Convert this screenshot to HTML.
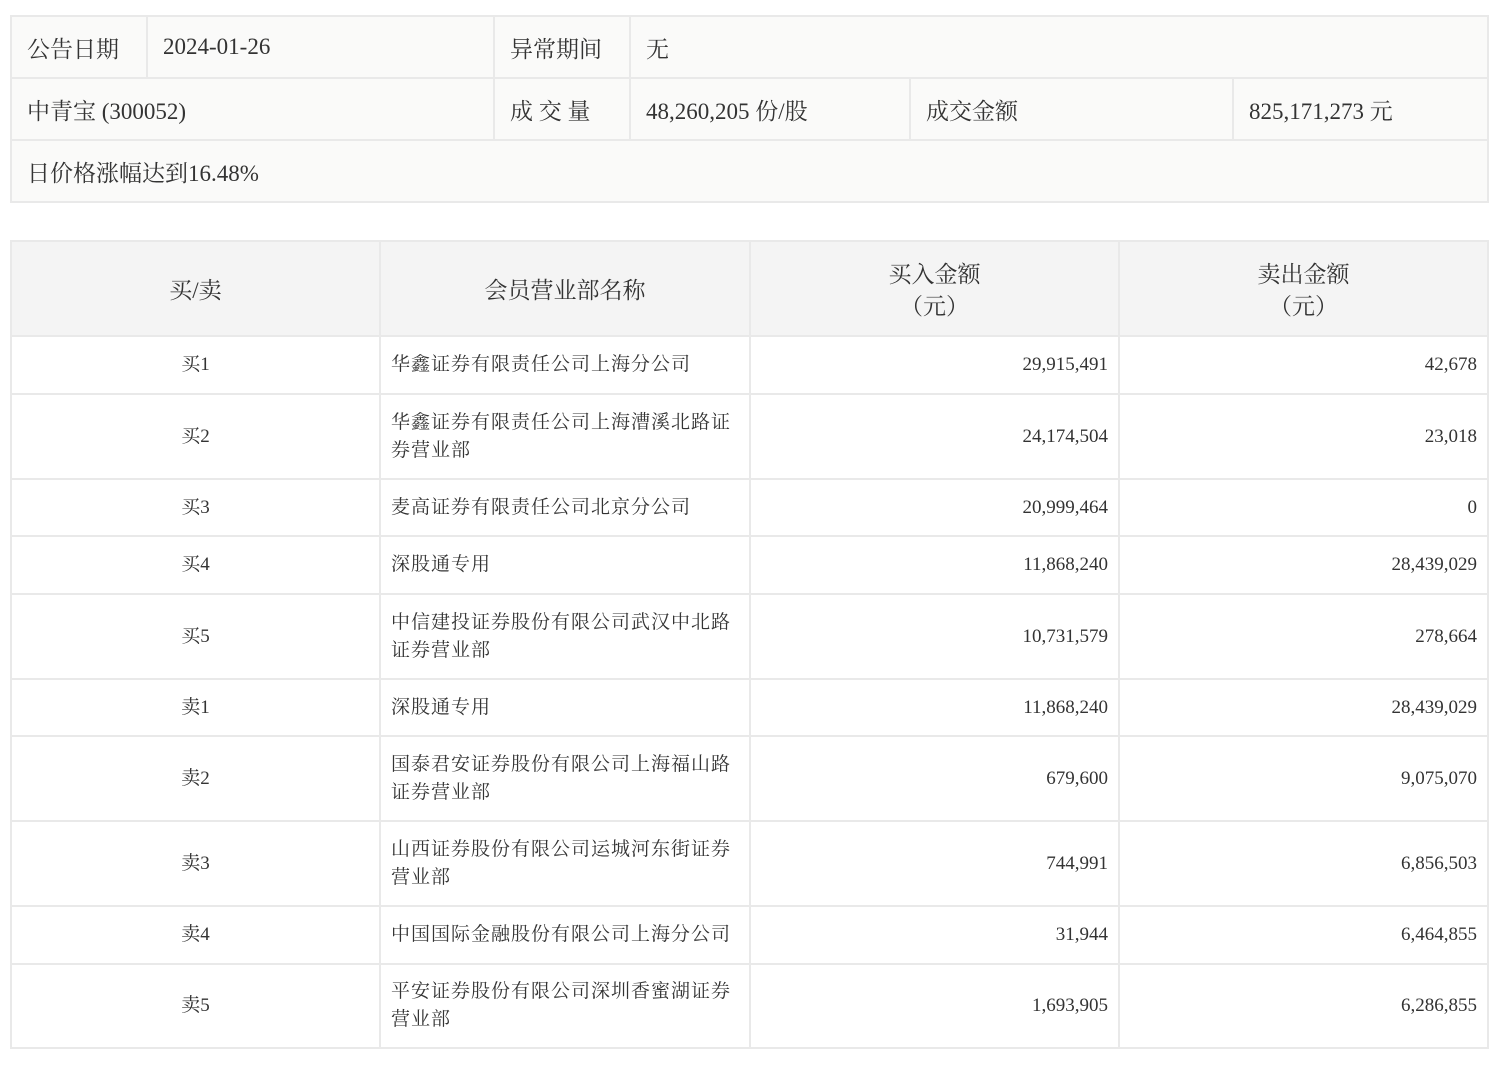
<!DOCTYPE html>
<html><head><meta charset="utf-8"><style>
body{margin:0;background:#fff;font-family:"Liberation Serif","Noto Serif CJK SC",serif;color:#333;}
table{border-collapse:collapse;position:absolute;left:10px;width:1477px;table-layout:fixed;}
td,th{border:2px solid #e9e9e9;padding:0;font-weight:normal;}
#t1{top:15px;background:#fafaf9;font-size:23px;}
#t1 td{height:60px;padding-left:15px;}
#t2{top:240px;font-size:19px;}
#t2 th{background:#f4f4f4;height:89px;font-size:23px;line-height:32px;padding-top:4px;}
#t2 td{line-height:28px;}
.c{text-align:center}.r{text-align:right;padding-right:10px}.l{padding-left:10px;padding-right:14px;letter-spacing:1px}
</style></head><body>
<table id="t1">
<colgroup><col style="width:136px"><col style="width:347px"><col style="width:136px"><col style="width:280px"><col style="width:323px"><col style="width:255px"></colgroup>
<tr><td>公告日期</td><td>2024-01-26</td><td>异常期间</td><td colspan="3">无</td></tr>
<tr><td colspan="2">中青宝 (300052)</td><td>成 交 量</td><td>48,260,205 份/股</td><td>成交金额</td><td>825,171,273 元</td></tr>
<tr><td colspan="6">日价格涨幅达到16.48%</td></tr>
</table>
<table id="t2">
<colgroup><col style="width:369px"><col style="width:370px"><col style="width:369px"><col style="width:369px"></colgroup>
<tr><th>买/卖</th><th>会员营业部名称</th><th>买入金额<br>（元）</th><th>卖出金额<br>（元）</th></tr>
<tr style="height:58px"><td class="c">买1</td><td class="l">华鑫证券有限责任公司上海分公司</td><td class="r">29,915,491</td><td class="r">42,678</td></tr>
<tr style="height:85px"><td class="c">买2</td><td class="l">华鑫证券有限责任公司上海漕溪北路证券营业部</td><td class="r">24,174,504</td><td class="r">23,018</td></tr>
<tr style="height:57px"><td class="c">买3</td><td class="l">麦高证券有限责任公司北京分公司</td><td class="r">20,999,464</td><td class="r">0</td></tr>
<tr style="height:58px"><td class="c">买4</td><td class="l">深股通专用</td><td class="r">11,868,240</td><td class="r">28,439,029</td></tr>
<tr style="height:85px"><td class="c">买5</td><td class="l">中信建投证券股份有限公司武汉中北路证券营业部</td><td class="r">10,731,579</td><td class="r">278,664</td></tr>
<tr style="height:57px"><td class="c">卖1</td><td class="l">深股通专用</td><td class="r">11,868,240</td><td class="r">28,439,029</td></tr>
<tr style="height:85px"><td class="c">卖2</td><td class="l">国泰君安证券股份有限公司上海福山路证券营业部</td><td class="r">679,600</td><td class="r">9,075,070</td></tr>
<tr style="height:85px"><td class="c">卖3</td><td class="l">山西证券股份有限公司运城河东街证券营业部</td><td class="r">744,991</td><td class="r">6,856,503</td></tr>
<tr style="height:58px"><td class="c">卖4</td><td class="l">中国国际金融股份有限公司上海分公司</td><td class="r">31,944</td><td class="r">6,464,855</td></tr>
<tr style="height:84px"><td class="c">卖5</td><td class="l">平安证券股份有限公司深圳香蜜湖证券营业部</td><td class="r">1,693,905</td><td class="r">6,286,855</td></tr>
</table>
</body></html>
